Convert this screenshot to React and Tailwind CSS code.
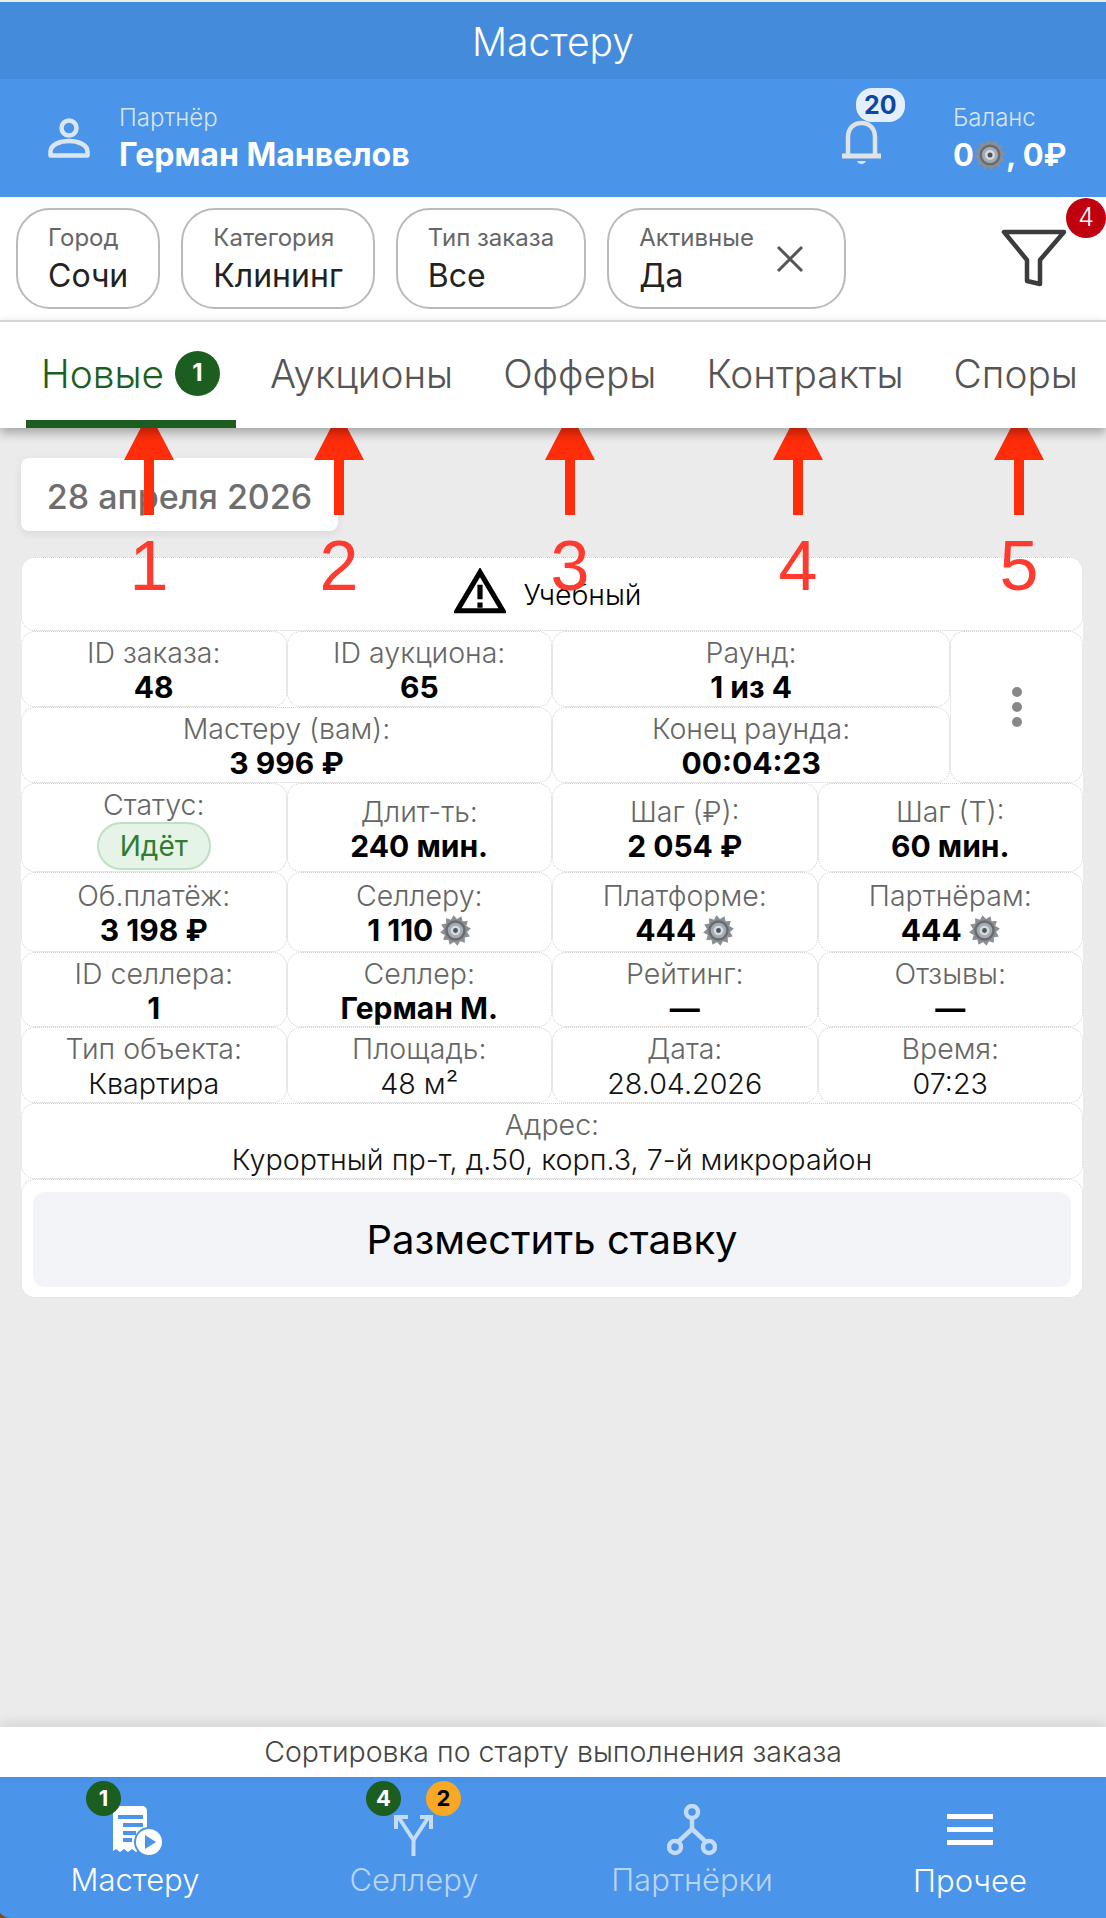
import React from "react";

const Gear = ({ size = 30, className = "" }) => {
  const points = [];
  for (let i = 0; i < 24; i++) {
    const r = i % 2 === 0 ? 16 : 12;
    const a = ((i - 0.5) * Math.PI) / 12;
    points.push(`${16 + r * Math.cos(a)},${16 + r * Math.sin(a)}`);
  }
  return (
    <svg width={size} height={size} viewBox="0 0 32 32" className={className}>
      <polygon points={points.join(" ")} fill="#8b8f94" strokeLinejoin="round" />
      <circle cx="16" cy="16" r="10.5" fill="#686c71" />
      <circle cx="16" cy="16" r="8" fill="#a4abb2" />
      <circle cx="16" cy="16" r="5" fill="#d5dbe0" />
      <circle cx="16" cy="16" r="2.500" fill="#4f5357" />
    </svg>
  );
};

const PersonIcon = () => (
  <svg width="42" height="40" viewBox="0 0 42 40" fill="none" stroke="#dbe6f3" strokeWidth="4.5">
    <circle cx="21" cy="10" r="7.5" />
    <path d="M2.5 37.5v-4c0-7 10-10.500 18.500-10.500s18.500 3.500 18.500 10.500v4z" strokeLinejoin="round" />
  </svg>
);

const BellIcon = () => (
  <svg width="42" height="46" viewBox="0 0 42 46" fill="none" stroke="#dfe3e8" strokeWidth="4.500">
    <path d="M7 35V17C7 8 13 3 20.500 3S34 8 34 17v18" />
    <path d="M1 36h39" strokeWidth="5" />
    <path d="M16 41c1 4 8 4 9 0z" fill="#dfe3e8" stroke="none" />
  </svg>
);

const FilterIcon = () => (
  <svg width="66" height="58" viewBox="0 0 66 58" fill="none" stroke="#3c3c3c" strokeWidth="4.500" strokeLinejoin="round">
    <path d="M3 3h60L39 31v24l-13-3V31z" />
  </svg>
);

const ReceiptIcon = () => (
  <svg width="52" height="50" viewBox="0 0 52 50">
    <path d="M2 3c0-2 1-3 3-3h26c3 0 5 2 5 5v38l-3 3-4-3-4 3-4-3-4 3-4-3-4 3-4-3-3 2z" fill="#fff" />
    <path d="M7 9h25v4H7zM12 17h20v4H12zM12 25h13v4H12zM12 32h9v4h-9z" fill="#4a94ea" />
    <circle cx="38" cy="36" r="15" fill="#4a94ea" />
    <circle cx="38" cy="36" r="13" fill="#fff" />
    <path d="M34 29l11 7-11 7z" fill="#4a94ea" />
  </svg>
);

const SplitIcon = () => (
  <svg width="42" height="42" viewBox="0 0 42 42" fill="none" stroke="#c5dcf7" strokeWidth="4">
    <path d="M20.500 42V26L6 4" />
    <path d="M3 15V3h12" />
    <path d="M20.500 26L35 4" />
    <path d="M27 3h11v12" />
  </svg>
);

const PartnersIcon = () => (
  <svg width="50" height="52" viewBox="0 0 50 52" fill="none" stroke="#c5dcf7" strokeWidth="4.500">
    <circle cx="25" cy="8" r="6" />
    <circle cx="8" cy="43" r="6" />
    <circle cx="42" cy="43" r="6" />
    <path d="M25 14v11L11 38M25 25l14 13" />
  </svg>
);

const MenuIcon = () => (
  <svg width="46" height="31" viewBox="0 0 46 31" fill="#fff">
    <rect width="46" height="5" />
    <rect y="13" width="46" height="5" />
    <rect y="26" width="46" height="5" />
  </svg>
);

const Cell = ({ label, value, plain, gear, className = "" }) => (
  <div className={`flex flex-col items-center justify-center rounded-[14px] border border-dotted border-[#cfcfcf] pt-[2px] ${className}`}>
    <div className="text-[28.5px] leading-[35px] font-light text-[#666]">{label}</div>
    {value && (
      <div className={`flex items-center gap-[7px] leading-[35px] ${plain ? "text-[28.700px] font-light text-[#111]" : "text-[30px] font-bold text-black"}`}>
        {value}
        {gear && <Gear size={31} />}
      </div>
    )}
  </div>
);

const tabs = ["Аукционы", "Офферы", "Контракты", "Споры"];

const arrows = [
  { x: 149, n: "1" },
  { x: 339, n: "2" },
  { x: 570, n: "3" },
  { x: 798, n: "4" },
  { x: 1019, n: "5" },
];

const Arrow = ({ x, n }) => (
  <div className="absolute top-[412px] flex w-[60px] flex-col items-center" style={{ left: x - 30 }}>
    <svg width="50" height="103" viewBox="0 0 50 103" fill="#ff2d0a">
      <path d="M25 0l25 48H30v55H20V48H0z" />
    </svg>
    <span className="mt-[16px] font-['Liberation_Sans'] text-[70px] leading-[70px] text-[#ff3b30]">{n}</span>
  </div>
);

const Chip = ({ label, value, children }) => (
  <div className="flex h-[101px] items-center rounded-[34px] border-2 border-[#bababa] px-[30px]">
    <div>
      <div className="text-[24px] leading-[30px] text-[#666]">{label}</div>
      <div className="mt-[4px] text-[32px] leading-[38px] text-[#222]">{value}</div>
    </div>
    {children}
  </div>
);

export default function App() {
  return (
    <div className="relative flex h-[1918px] flex-col overflow-hidden bg-[#ebebeb] font-['Inter',sans-serif]">
      <div className="mt-[2px] flex h-[77px] items-center justify-center bg-[#458bdc] pt-[4px] text-[39px] font-light text-white">
        Мастеру
      </div>

      <div className="flex h-[118px] items-center bg-[#4a94ea] pl-[48px]">
        <PersonIcon />
        <div className="ml-[29px]">
          <div className="text-[24px] leading-[32px] font-light text-[#d6e4f6]">Партнёр</div>
          <div className="mt-[2px] text-[32px] leading-[38px] font-bold text-white">Герман Манвелов</div>
        </div>
        <div className="relative ml-auto mt-[9px] -translate-x-[1px]">
          <BellIcon />
          <span className="absolute top-[-32px] left-[15px] rounded-[16px] bg-[#e3f0fc] px-[8px] text-[25px] leading-[34px] font-bold text-[#0d47a1]">
            20
          </span>
        </div>
        <div className="ml-[69px] w-[153px]">
          <div className="text-[24px] leading-[32px] font-light text-[#d6e4f6]">Баланс</div>
          <div className="mt-[2px] flex items-center text-[31px] leading-[38px] font-bold text-white">
            0<Gear size={32} />, 0₽
          </div>
        </div>
      </div>

      <div className="relative flex h-[123px] items-center gap-[21px] bg-white pl-[16px]">
        <Chip label="Город" value="Сочи" />
        <Chip label="Категория" value="Клининг" />
        <Chip label="Тип заказа" value="Все" />
        <Chip label="Активные" value="Да">
          <svg className="ml-[22px] mr-[10px]" width="28" height="28" viewBox="0 0 28 28" stroke="#555" strokeWidth="3">
            <path d="M2 2l24 24M26 2L2 26" />
          </svg>
        </Chip>
        <div className="absolute top-[32px] left-[1001px]">
          <FilterIcon />
        </div>
        <div className="absolute top-[1px] right-0 flex h-[40px] w-[40px] items-center justify-center rounded-full bg-[#c0000f] text-[25px] font-light text-white">
          4
        </div>
      </div>

      <div className="z-10 h-[108px] border-t-2 border-[#d4d4d4] bg-white shadow-[0_5px_10px_rgba(0,0,0,0.3)]">
        <div className="flex h-full items-stretch gap-[20px] pl-[26px]">
          <div className="-mr-[1px] flex w-[210px] shrink-0 items-center gap-[11px] border-b-[8px] border-[#1b5e20] pt-[6px] pl-[15px] text-[38.800px] font-light text-[#1b5e20]">
            Новые
            <span className="flex h-[45px] w-[45px] -translate-y-[1px] items-center justify-center rounded-full bg-[#1b5e20] text-[24px] font-bold text-white">
              1
            </span>
          </div>
          {tabs.map((tab) => (
            <div key={tab} className="flex items-center px-[15px] pb-[2px] text-[38.800px] font-light text-[#555]">
              {tab}
            </div>
          ))}
        </div>
      </div>

      <main className="flex-1 px-[21px] pt-[30px]">
        <div className="w-[317px] rounded-[8px] bg-white pt-[17px] pb-[13px] text-center text-[34px] leading-[43px] font-medium text-[#6e6e6e] shadow-[0_3px_8px_rgba(0,0,0,0.08)]">
          28 апреля 2026
        </div>

        <div className="mt-[26px] grid w-[1062px] grid-cols-8 grid-rows-[74px_76px_76px_89px_80px_75px_76px_76px_119px] rounded-[14px] bg-white">
          <div className="col-span-8 flex items-center justify-center gap-[17px] rounded-[14px] border border-dotted border-[#cfcfcf] pr-[8px] text-[28.500px] font-light text-black">
            <svg className="-mt-[6px]" width="52" height="46" viewBox="0 0 50 44">
              <path d="M25 4L3 41h44z" fill="none" stroke="#000" strokeWidth="5" />
              <path d="M22.500 16h5v14h-5zM22.500 33h5v5h-5z" fill="#000" />
            </svg>
            <span className="pt-[2px]">Учебный</span>
          </div>

          <Cell className="col-span-2" label="ID заказа:" value="48" />
          <Cell className="col-span-2" label="ID аукциона:" value="65" />
          <Cell className="col-span-3" label="Раунд:" value="1 из 4" />
          <div className="row-span-2 flex flex-col items-center justify-center gap-[5px] rounded-[14px] border border-dotted border-[#cfcfcf]">
            <span className="h-[10px] w-[10px] rounded-full bg-[#888]" />
            <span className="h-[10px] w-[10px] rounded-full bg-[#888]" />
            <span className="h-[10px] w-[10px] rounded-full bg-[#888]" />
          </div>
          <Cell className="col-span-4" label="Мастеру (вам):" value="3 996 ₽" />
          <Cell className="col-span-3" label="Конец раунда:" value="00:04:23" />

          <div className="col-span-2 flex flex-col items-center rounded-[14px] border border-dotted border-[#cfcfcf] pt-[3px]">
            <div className="text-[28.5px] leading-[35px] font-light text-[#666]">Статус:</div>
            <div className="flex h-[48px] w-[114px] items-center justify-center rounded-[24px] border-2 border-[#bfe0c5] bg-[#e6f4e8] text-[28px] text-[#2e7d32]">
              Идёт
            </div>
          </div>
          <Cell className="col-span-2" label="Длит-ть:" value="240 мин." />
          <Cell className="col-span-2" label="Шаг (₽):" value="2 054 ₽" />
          <Cell className="col-span-2" label="Шаг (Т):" value="60 мин." />

          <Cell className="col-span-2" label="Об.платёж:" value="3 198 ₽" />
          <Cell className="col-span-2" label="Селлеру:" value="1 110" gear />
          <Cell className="col-span-2" label="Платформе:" value="444" gear />
          <Cell className="col-span-2" label="Партнёрам:" value="444" gear />

          <Cell className="col-span-2" label="ID селлера:" value="1" />
          <Cell className="col-span-2" label="Селлер:" value="Герман М." />
          <Cell className="col-span-2" label="Рейтинг:" value="—" />
          <Cell className="col-span-2" label="Отзывы:" value="—" />

          <Cell className="col-span-2" label="Тип объекта:" value="Квартира" plain />
          <Cell className="col-span-2" label="Площадь:" value="48 м²" plain />
          <Cell className="col-span-2" label="Дата:" value="28.04.2026" plain />
          <Cell className="col-span-2" label="Время:" value="07:23" plain />

          <Cell className="col-span-8" label="Адрес:" value="Курортный пр-т, д.50, корп.3, 7-й микрорайон" plain />

          <div className="col-span-8 rounded-[14px] border border-dotted border-[#cfcfcf] px-[11px] pt-[12px]">
            <button className="flex h-[95px] w-full items-center justify-center rounded-[12px] bg-[#f2f4f8] text-[40px] text-black">
              Разместить ставку
            </button>
          </div>
        </div>
      </main>

      <div className="z-10 flex h-[50px] items-center justify-center bg-white text-[28.500px] font-light text-[#444] shadow-[0_-4px_12px_rgba(0,0,0,0.1)]">
        Сортировка по старту выполнения заказа
      </div>

      <div className="bg-[#7a4a22]">
        <nav className="-ml-[3px] grid h-[141px] w-[1112px] grid-cols-4 rounded-bl-[14px] bg-[#4a94ea] text-[31px] font-light">
          <div className="flex flex-col items-center pt-[29px] text-white">
            <div className="relative ml-[2px] flex h-[50px] items-end">
              <ReceiptIcon />
              <span className="absolute top-[-25px] left-[-25px] flex h-[35px] w-[35px] items-center justify-center rounded-full bg-[#1b5e20] text-[22px] font-bold text-white">
                1
              </span>
            </div>
            <span className="mt-[5px] -ml-[2px] leading-[38px]">Мастеру</span>
          </div>
          <div className="flex flex-col items-center pt-[29px] text-[#b9d4f5]">
            <div className="relative flex h-[50px] items-end">
              <SplitIcon />
              <span className="absolute top-[-25px] left-[-27px] flex h-[35px] w-[35px] items-center justify-center rounded-full bg-[#1b5e20] text-[22px] font-bold text-white">
                4
              </span>
              <span className="absolute top-[-25px] left-[33px] flex h-[35px] w-[35px] items-center justify-center rounded-full bg-[#f9a825] text-[22px] font-bold text-black">
                2
              </span>
            </div>
            <span className="mt-[5px] leading-[38px]">Селлеру</span>
          </div>
          <div className="flex flex-col items-center pt-[27px] text-[#b9d4f5]">
            <PartnersIcon />
            <span className="mt-[5px] leading-[38px]">Партнёрки</span>
          </div>
          <div className="flex flex-col items-center pt-[37px] text-white">
            <MenuIcon />
            <span className="mt-[17px] leading-[38px]">Прочее</span>
          </div>
        </nav>
      </div>

      {arrows.map((a) => (
        <Arrow key={a.n} x={a.x} n={a.n} />
      ))}
    </div>
  );
}
